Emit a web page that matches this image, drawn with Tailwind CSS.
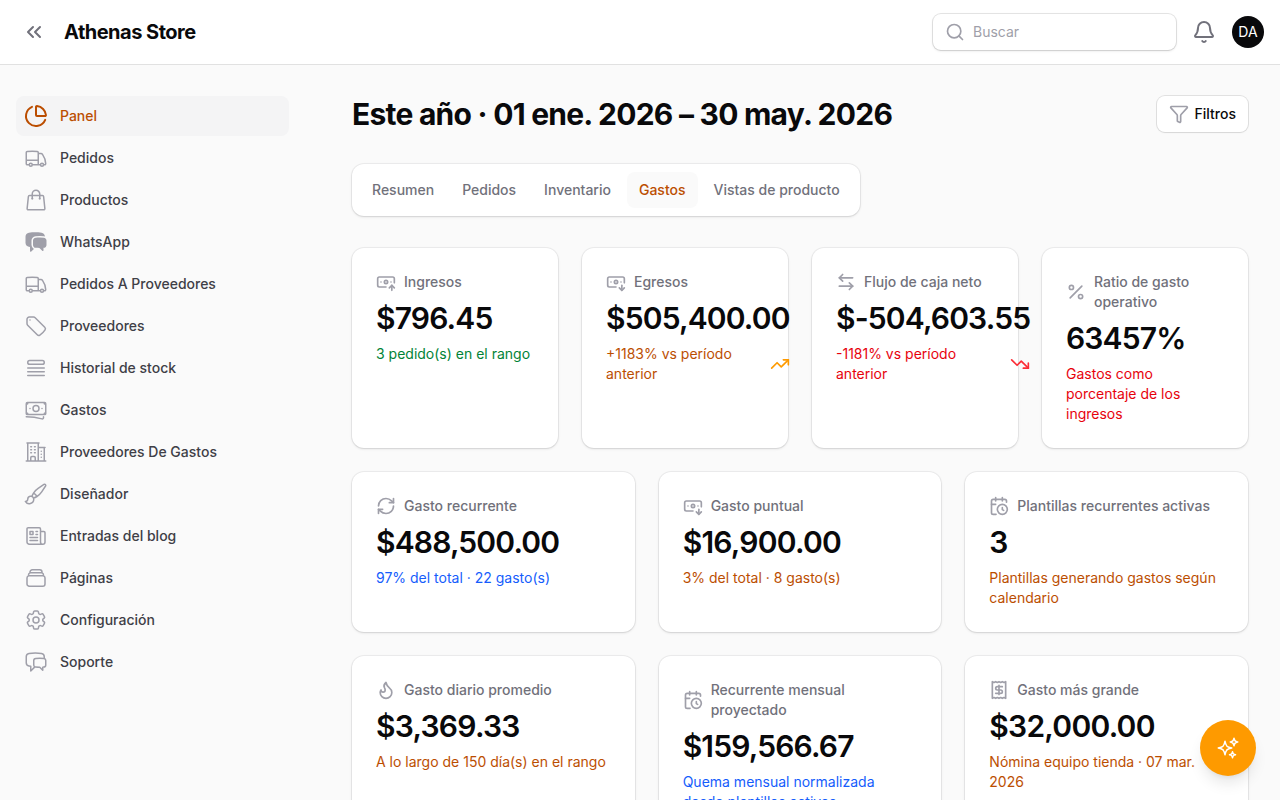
<!DOCTYPE html>
<html lang="es">
<head>
    <meta charset="UTF-8">
    <meta name="viewport" content="width=device-width, initial-scale=1.0">
    <title>Panel - Athenas Store</title>
    <script src="https://cdn.jsdelivr.net/npm/@tailwindcss/browser@4"></script>
</head>
<body class="h-screen overflow-hidden bg-zinc-50 font-['Inter',sans-serif] text-sm text-zinc-950">
    <!-- Top bar -->
    <header class="flex h-16 items-center bg-white pl-[22px] pr-4 ring-1 ring-zinc-950/10">
        <svg class="size-6 text-zinc-500" viewBox="0 0 24 24" fill="none" stroke="currentColor" stroke-width="2" stroke-linecap="round" stroke-linejoin="round"><path d="m11 17-5-5 5-5"/><path d="m18 17-5-5 5-5"/></svg>
        <div class="ml-[18px] text-xl font-bold leading-5 tracking-tight">Athenas Store</div>
        <div class="ml-auto flex items-center gap-4">
            <div class="flex h-9 w-[243px] items-center gap-2 rounded-lg bg-white pl-3 shadow-sm ring-1 ring-zinc-950/10">
                <svg class="size-5 text-zinc-400" viewBox="0 0 24 24" fill="none" stroke="currentColor" stroke-width="2" stroke-linecap="round" stroke-linejoin="round"><path d="m21 21-4.34-4.34"/><circle cx="11" cy="11" r="8"/></svg>
                <span class="text-zinc-400">Buscar</span>
            </div>
            <svg class="size-6 text-zinc-500" viewBox="0 0 24 24" fill="none" stroke="currentColor" stroke-width="2" stroke-linecap="round" stroke-linejoin="round"><path d="M10.268 21a2 2 0 0 0 3.464 0"/><path d="M3.262 15.326A1 1 0 0 0 4 17h16a1 1 0 0 0 .74-1.673C19.41 13.956 18 12.499 18 8A6 6 0 0 0 6 8c0 4.499-1.411 5.956-2.738 7.326"/></svg>
            <div class="flex size-8 items-center justify-center rounded-full bg-zinc-950 text-sm text-white">DA</div>
        </div>
    </header>

    <div class="flex">
        <!-- Sidebar -->
        <aside class="w-80 shrink-0 py-8 pl-4">
            <ul class="flex w-[273px] flex-col gap-0.5 font-medium text-zinc-700">
                <li class="flex h-10 items-center gap-3 rounded-lg bg-zinc-100 px-2 text-amber-700">
                    <svg class="size-6" viewBox="0 0 24 24" fill="none" stroke="currentColor" stroke-width="2" stroke-linecap="round" stroke-linejoin="round"><path d="M21 12c.552 0 1.005-.449.95-.998a10 10 0 0 0-8.953-8.951c-.55-.055-.998.398-.998.95v8a1 1 0 0 0 1 1z"/><path d="M21.21 15.89A10 10 0 1 1 8 2.83"/></svg>
                    <span>Panel</span>
                </li>
                <li class="flex h-10 items-center gap-3 rounded-lg px-2">
                    <svg class="size-6 text-zinc-400" viewBox="0 0 24 24" fill="none" stroke="currentColor" stroke-width="1.5" stroke-linecap="round" stroke-linejoin="round"><path d="M8.25 18.75a1.5 1.5 0 0 1-3 0m3 0a1.5 1.5 0 0 0-3 0m3 0h6m-9 0H3.375a1.125 1.125 0 0 1-1.125-1.125V14.25m17.25 4.5a1.5 1.5 0 0 1-3 0m3 0a1.5 1.5 0 0 0-3 0m3 0h1.125c.621 0 1.129-.504 1.09-1.124a17.902 17.902 0 0 0-3.213-9.193 2.056 2.056 0 0 0-1.58-.86H14.25M16.5 18.75h-2.25m0-11.177v-.958c0-.568-.422-1.048-.987-1.106a48.554 48.554 0 0 0-10.026 0 1.106 1.106 0 0 0-.987 1.106v7.635m12-6.677v6.677m0 4.5v-4.5m0 0h-12"/></svg>
                    <span>Pedidos</span>
                </li>
                <li class="flex h-10 items-center gap-3 rounded-lg px-2">
                    <svg class="size-6 text-zinc-400" viewBox="0 0 24 24" fill="none" stroke="currentColor" stroke-width="1.5" stroke-linecap="round" stroke-linejoin="round"><path d="M15.75 10.5V6a3.75 3.75 0 1 0-7.5 0v4.5m11.356-1.993 1.263 12c.07.665-.45 1.243-1.119 1.243H4.25a1.125 1.125 0 0 1-1.12-1.243l1.264-12A1.125 1.125 0 0 1 5.513 7.5h12.974c.576 0 1.059.435 1.119 1.007ZM8.625 10.5a.375.375 0 1 1-.75 0 .375.375 0 0 1 .75 0Zm7.5 0a.375.375 0 1 1-.75 0 .375.375 0 0 1 .75 0Z"/></svg>
                    <span>Productos</span>
                </li>
                <li class="flex h-10 items-center gap-3 rounded-lg px-2">
                    <svg class="size-6 text-zinc-400" viewBox="0 0 24 24" fill="currentColor"><path d="M4.913 2.658c2.075-.27 4.19-.408 6.337-.408 2.147 0 4.262.139 6.337.408 1.922.25 3.291 1.861 3.405 3.727a4.403 4.403 0 0 0-1.032-.211 50.89 50.89 0 0 0-8.42 0c-2.358.196-4.04 2.19-4.04 4.434v4.286a4.47 4.47 0 0 0 2.433 3.984L7.28 21.53A.75.75 0 0 1 6 21v-4.03a48.527 48.527 0 0 1-1.087-.128C2.905 16.58 1.5 14.833 1.5 12.862V6.638c0-1.97 1.405-3.718 3.413-3.979Z"/><path d="M15.75 7.5c-1.376 0-2.739.057-4.086.169C10.124 7.797 9 9.103 9 10.609v4.285c0 1.507 1.128 2.814 2.67 2.94 1.243.102 2.5.157 3.768.165l2.782 2.781a.75.75 0 0 0 1.28-.53v-2.39l.33-.026c1.542-.125 2.67-1.433 2.67-2.94v-4.286c0-1.505-1.125-2.811-2.664-2.94A49.392 49.392 0 0 0 15.75 7.5Z"/></svg>
                    <span>WhatsApp</span>
                </li>
                <li class="flex h-10 items-center gap-3 rounded-lg px-2">
                    <svg class="size-6 text-zinc-400" viewBox="0 0 24 24" fill="none" stroke="currentColor" stroke-width="1.5" stroke-linecap="round" stroke-linejoin="round"><path d="M8.25 18.75a1.5 1.5 0 0 1-3 0m3 0a1.5 1.5 0 0 0-3 0m3 0h6m-9 0H3.375a1.125 1.125 0 0 1-1.125-1.125V14.25m17.25 4.5a1.5 1.5 0 0 1-3 0m3 0a1.5 1.5 0 0 0-3 0m3 0h1.125c.621 0 1.129-.504 1.09-1.124a17.902 17.902 0 0 0-3.213-9.193 2.056 2.056 0 0 0-1.58-.86H14.25M16.5 18.75h-2.25m0-11.177v-.958c0-.568-.422-1.048-.987-1.106a48.554 48.554 0 0 0-10.026 0 1.106 1.106 0 0 0-.987 1.106v7.635m12-6.677v6.677m0 4.5v-4.5m0 0h-12"/></svg>
                    <span>Pedidos A Proveedores</span>
                </li>
                <li class="flex h-10 items-center gap-3 rounded-lg px-2">
                    <svg class="size-6 text-zinc-400" viewBox="0 0 24 24" fill="none" stroke="currentColor" stroke-width="1.5" stroke-linecap="round" stroke-linejoin="round"><path d="M9.568 3H5.25A2.25 2.25 0 0 0 3 5.25v4.318c0 .597.237 1.17.659 1.591l9.581 9.581c.699.699 1.78.872 2.607.33a18.095 18.095 0 0 0 5.223-5.223c.542-.827.369-1.908-.33-2.607L11.16 3.66A2.25 2.25 0 0 0 9.568 3Z"/><path d="M6 6h.008v.008H6V6Z"/></svg>
                    <span>Proveedores</span>
                </li>
                <li class="flex h-10 items-center gap-3 rounded-lg px-2">
                    <svg class="size-6 text-zinc-400" viewBox="0 0 24 24" fill="none" stroke="currentColor" stroke-width="1.5" stroke-linecap="round" stroke-linejoin="round"><path d="M3.75 12h16.5m-16.5 3.75h16.5M3.75 19.5h16.5M5.625 4.5h12.75a1.875 1.875 0 0 1 0 3.75H5.625a1.875 1.875 0 0 1 0-3.75Z"/></svg>
                    <span>Historial de stock</span>
                </li>
                <li class="flex h-10 items-center gap-3 rounded-lg px-2">
                    <svg class="size-6 text-zinc-400" viewBox="0 0 24 24" fill="none" stroke="currentColor" stroke-width="1.5" stroke-linecap="round" stroke-linejoin="round"><path d="M2.25 18.75a60.07 60.07 0 0 1 15.797 2.101c.727.198 1.453-.342 1.453-1.096V18.75M3.75 4.5v.75A.75.75 0 0 1 3 6h-.75m0 0v-.375c0-.621.504-1.125 1.125-1.125H20.25M2.25 6v9m18-10.5v.75c0 .414.336.75.75.75h.75m-1.5-1.5h.375c.621 0 1.125.504 1.125 1.125v9.75c0 .621-.504 1.125-1.125 1.125h-.375m1.5-1.5H21a.75.75 0 0 0-.75.75v.75m0 0H3.75m0 0h-.375a1.125 1.125 0 0 1-1.125-1.125V15m1.5 1.5v-.75A.75.75 0 0 0 3 15h-.75M15 10.5a3 3 0 1 1-6 0 3 3 0 0 1 6 0Zm3 0h.008v.008H18V10.5Zm-12 0h.008v.008H6V10.5Z"/></svg>
                    <span>Gastos</span>
                </li>
                <li class="flex h-10 items-center gap-3 rounded-lg px-2">
                    <svg class="size-6 text-zinc-400" viewBox="0 0 24 24" fill="none" stroke="currentColor" stroke-width="1.5" stroke-linecap="round" stroke-linejoin="round"><path d="M2.25 21h19.5m-18-18v18m10.5-18v18m6-13.5V21M6.75 6.75h.75m-.75 3h.75m-.75 3h.75m3-6h.75m-.75 3h.75m-.75 3h.75M6.75 21v-3.375c0-.621.504-1.125 1.125-1.125h2.25c.621 0 1.125.504 1.125 1.125V21M3 3h12m-.75 4.5H21m-3.75 3.75h.008v.008h-.008v-.008Zm0 3h.008v.008h-.008v-.008Zm0 3h.008v.008h-.008v-.008Z"/></svg>
                    <span>Proveedores De Gastos</span>
                </li>
                <li class="flex h-10 items-center gap-3 rounded-lg px-2">
                    <svg class="size-6 text-zinc-400" viewBox="0 0 24 24" fill="none" stroke="currentColor" stroke-width="1.5" stroke-linecap="round" stroke-linejoin="round"><path d="M9.53 16.122a3 3 0 0 0-5.78 1.128 2.25 2.25 0 0 1-2.4 2.245 4.5 4.5 0 0 0 8.4-2.245c0-.399-.078-.78-.22-1.128Zm0 0a15.998 15.998 0 0 0 3.388-1.62m-5.043-.025a15.994 15.994 0 0 1 1.622-3.395m3.42 3.42a15.995 15.995 0 0 0 4.764-4.648l3.876-5.814a1.151 1.151 0 0 0-1.597-1.597L14.146 6.32a15.996 15.996 0 0 0-4.649 4.763m3.42 3.42a6.776 6.776 0 0 0-3.42-3.42"/></svg>
                    <span>Diseñador</span>
                </li>
                <li class="flex h-10 items-center gap-3 rounded-lg px-2">
                    <svg class="size-6 text-zinc-400" viewBox="0 0 24 24" fill="none" stroke="currentColor" stroke-width="1.5" stroke-linecap="round" stroke-linejoin="round"><path d="M12 7.5h1.5m-1.5 3h1.5m-7.5 3h7.5m-7.5 3h7.5m3-9h3.375c.621 0 1.125.504 1.125 1.125V18a2.25 2.25 0 0 1-2.25 2.25M16.5 7.5V18a2.25 2.25 0 0 0 2.25 2.25M16.5 7.5V4.875c0-.621-.504-1.125-1.125-1.125H4.125C3.504 3.75 3 4.254 3 4.875V18a2.25 2.25 0 0 0 2.25 2.25h13.5M6 7.5h3v3H6v-3Z"/></svg>
                    <span>Entradas del blog</span>
                </li>
                <li class="flex h-10 items-center gap-3 rounded-lg px-2">
                    <svg class="size-6 text-zinc-400" viewBox="0 0 24 24" fill="none" stroke="currentColor" stroke-width="1.5" stroke-linecap="round" stroke-linejoin="round"><path d="M6 6.878V6a2.25 2.25 0 0 1 2.25-2.25h7.5A2.25 2.25 0 0 1 18 6v.878m-12 0c.235-.083.487-.128.75-.128h10.5c.263 0 .515.045.75.128m-12 0A2.25 2.25 0 0 0 4.5 9v.878m13.5-3A2.25 2.25 0 0 1 19.5 9v.878m0 0a2.246 2.246 0 0 0-.75-.128H5.25c-.263 0-.515.045-.75.128m15 0A2.25 2.25 0 0 1 21 12v6a2.25 2.25 0 0 1-2.25 2.25H5.25A2.25 2.25 0 0 1 3 18v-6c0-.98.626-1.813 1.5-2.122"/></svg>
                    <span>Páginas</span>
                </li>
                <li class="flex h-10 items-center gap-3 rounded-lg px-2">
                    <svg class="size-6 text-zinc-400" viewBox="0 0 24 24" fill="none" stroke="currentColor" stroke-width="1.5" stroke-linecap="round" stroke-linejoin="round"><path d="M9.594 3.94c.09-.542.56-.94 1.11-.94h2.593c.55 0 1.02.398 1.11.94l.213 1.281c.063.374.313.686.645.87.074.04.147.083.22.127.325.196.72.257 1.075.124l1.217-.456a1.125 1.125 0 0 1 1.37.49l1.296 2.247a1.125 1.125 0 0 1-.26 1.431l-1.003.827c-.293.241-.438.613-.43.992a7.723 7.723 0 0 1 0 .255c-.008.378.137.75.43.991l1.004.827c.424.35.534.955.26 1.43l-1.298 2.247a1.125 1.125 0 0 1-1.369.491l-1.217-.456c-.355-.133-.75-.072-1.076.124a6.47 6.47 0 0 1-.22.128c-.331.183-.581.495-.644.869l-.213 1.281c-.09.543-.56.94-1.11.94h-2.594c-.55 0-1.019-.398-1.11-.94l-.213-1.281c-.062-.374-.312-.686-.644-.87a6.52 6.52 0 0 1-.22-.127c-.325-.196-.72-.257-1.076-.124l-1.217.456a1.125 1.125 0 0 1-1.369-.49l-1.297-2.247a1.125 1.125 0 0 1 .26-1.431l1.004-.827c.292-.24.437-.613.43-.991a6.932 6.932 0 0 1 0-.255c.007-.38-.138-.751-.43-.992l-1.004-.827a1.125 1.125 0 0 1-.26-1.43l1.297-2.247a1.125 1.125 0 0 1 1.37-.491l1.216.456c.356.133.751.072 1.076-.124.072-.044.146-.086.22-.128.332-.183.582-.495.644-.869l.214-1.28Z"/><path d="M15 12a3 3 0 1 1-6 0 3 3 0 0 1 6 0Z"/></svg>
                    <span>Configuración</span>
                </li>
                <li class="flex h-10 items-center gap-3 rounded-lg px-2">
                    <svg class="size-6 text-zinc-400" viewBox="0 0 24 24" fill="none" stroke="currentColor" stroke-width="1.5" stroke-linecap="round" stroke-linejoin="round"><path d="M20.25 8.511c.884.284 1.5 1.128 1.5 2.097v4.286c0 1.136-.847 2.1-1.98 2.193-.34.027-.68.052-1.02.072v3.091l-3-3c-1.354 0-2.694-.055-4.02-.163a2.115 2.115 0 0 1-.825-.242m9.345-8.334a2.126 2.126 0 0 0-.476-.095 48.64 48.64 0 0 0-8.048 0c-1.131.094-1.976 1.057-1.976 2.192v4.286c0 .837.46 1.58 1.155 1.951m9.345-8.334V6.637c0-1.621-1.152-3.026-2.76-3.235A48.455 48.455 0 0 0 11.25 3c-2.115 0-4.198.137-6.24.402-1.608.209-2.76 1.614-2.76 3.235v6.226c0 1.621 1.152 3.026 2.76 3.235.577.075 1.157.14 1.74.194V21l4.155-4.155"/></svg>
                    <span>Soporte</span>
                </li>
            </ul>
        </aside>

        <main class="flex min-w-0 flex-1 flex-col gap-8 px-8 py-8">
            <div class="flex items-center justify-between">
                <h1 class="text-3xl font-bold tracking-tight">Este año · 01 ene. 2026 – 30 may. 2026</h1>
                <button class="flex h-9 items-center gap-1.5 rounded-lg bg-white px-3 font-medium shadow-xs ring-1 ring-zinc-950/10">
                    <svg class="size-5 text-zinc-400" viewBox="0 0 24 24" fill="none" stroke="currentColor" stroke-width="2" stroke-linecap="round" stroke-linejoin="round"><path d="M10 20a1 1 0 0 0 .553.895l2 1A1 1 0 0 0 14 21v-7a2 2 0 0 1 .517-1.341L21.74 4.67A1 1 0 0 0 21 3H3a1 1 0 0 0-.742 1.67l7.225 7.989A2 2 0 0 1 10 14z"/></svg>
                    Filtros
                </button>
            </div>

            <!-- Tabs -->
            <nav class="flex w-fit gap-1 rounded-xl bg-white p-2 font-medium text-zinc-500 shadow-sm ring-1 ring-zinc-950/5">
                <a class="rounded-lg px-3 py-2">Resumen</a>
                <a class="rounded-lg px-3 py-2">Pedidos</a>
                <a class="rounded-lg px-3 py-2">Inventario</a>
                <a class="rounded-lg bg-zinc-50 px-3 py-2 text-amber-700">Gastos</a>
                <a class="rounded-lg px-3 py-2">Vistas de producto</a>
            </nav>

            <div class="flex flex-col gap-6">
                <div class="grid grid-cols-4 gap-6">
                    <div class="rounded-xl bg-white p-6 shadow-sm ring-1 ring-zinc-950/5">
                        <div class="grid gap-y-2">
                            <div class="flex items-center gap-2 font-medium text-zinc-500">
                                <svg class="size-5 shrink-0 text-zinc-400" viewBox="0 0 24 24" fill="none" stroke="currentColor" stroke-width="2" stroke-linecap="round" stroke-linejoin="round"><path d="M12 18H4a2 2 0 0 1-2-2V8a2 2 0 0 1 2-2h16a2 2 0 0 1 2 2v5"/><path d="M18 12h.01"/><path d="M19 22v-6"/><path d="m22 19-3-3-3 3"/><path d="M6 12h.01"/><circle cx="12" cy="12" r="2"/></svg>
                                <span>Ingresos</span>
                            </div>
                            <div class="text-3xl font-semibold tracking-[-0.028em]">$796.45</div>
                            <div class="text-green-700">3 pedido(s) en el rango</div>
                        </div>
                    </div>
                    <div class="min-w-0 rounded-xl bg-white p-6 shadow-sm ring-1 ring-zinc-950/5">
                        <div class="grid gap-y-2">
                            <div class="flex items-center gap-2 font-medium text-zinc-500">
                                <svg class="size-5 shrink-0 text-zinc-400" viewBox="0 0 24 24" fill="none" stroke="currentColor" stroke-width="2" stroke-linecap="round" stroke-linejoin="round"><path d="M12 18H4a2 2 0 0 1-2-2V8a2 2 0 0 1 2-2h16a2 2 0 0 1 2 2v5"/><path d="m16 19 3 3 3-3"/><path d="M18 12h.01"/><path d="M19 16v6"/><path d="M6 12h.01"/><circle cx="12" cy="12" r="2"/></svg>
                                <span>Egresos</span>
                            </div>
                            <div class="text-3xl font-semibold tracking-[-0.028em]">$505,400.00</div>
                            <div class="flex items-center gap-1 text-amber-700">
                                <span>+1183% vs período anterior</span>
                                <svg class="size-5 shrink-0 text-amber-500" viewBox="0 0 24 24" fill="none" stroke="currentColor" stroke-width="2" stroke-linecap="round" stroke-linejoin="round"><path d="M16 7h6v6"/><path d="m22 7-8.5 8.5-5-5L2 17"/></svg>
                            </div>
                        </div>
                    </div>
                    <div class="min-w-0 rounded-xl bg-white p-6 shadow-sm ring-1 ring-zinc-950/5">
                        <div class="grid gap-y-2">
                            <div class="flex items-center gap-2 font-medium text-zinc-500">
                                <svg class="size-5 shrink-0 text-zinc-400" viewBox="0 0 24 24" fill="none" stroke="currentColor" stroke-width="2" stroke-linecap="round" stroke-linejoin="round"><path d="M8 3 4 7l4 4"/><path d="M4 7h16"/><path d="m16 21 4-4-4-4"/><path d="M20 17H4"/></svg>
                                <span>Flujo de caja neto</span>
                            </div>
                            <div class="text-3xl font-semibold tracking-[-0.028em] whitespace-nowrap">$-504,603.55</div>
                            <div class="flex items-center gap-1 text-red-600">
                                <span>-1181% vs período anterior</span>
                                <svg class="size-5 shrink-0 text-red-500" viewBox="0 0 24 24" fill="none" stroke="currentColor" stroke-width="2" stroke-linecap="round" stroke-linejoin="round"><path d="M16 17h6v-6"/><path d="m22 17-8.5-8.5-5 5L2 7"/></svg>
                            </div>
                        </div>
                    </div>
                    <div class="min-w-0 rounded-xl bg-white p-6 shadow-sm ring-1 ring-zinc-950/5">
                        <div class="grid gap-y-2">
                            <div class="flex items-center gap-2 font-medium text-zinc-500">
                                <svg class="size-5 shrink-0 text-zinc-400" viewBox="0 0 24 24" fill="none" stroke="currentColor" stroke-width="2" stroke-linecap="round" stroke-linejoin="round"><path d="M19 5 5 19"/><circle cx="6.5" cy="6.5" r="2.5"/><circle cx="17.5" cy="17.5" r="2.5"/></svg>
                                <span>Ratio de gasto operativo</span>
                            </div>
                            <div class="text-3xl font-semibold tracking-[-0.028em]">63457%</div>
                            <div class="text-red-600">Gastos como porcentaje de los ingresos</div>
                        </div>
                    </div>
                </div>

                <div class="grid grid-cols-3 gap-6">
                    <div class="rounded-xl bg-white p-6 shadow-sm ring-1 ring-zinc-950/5">
                        <div class="grid gap-y-2">
                            <div class="flex items-center gap-2 font-medium text-zinc-500">
                                <svg class="size-5 shrink-0 text-zinc-400" viewBox="0 0 24 24" fill="none" stroke="currentColor" stroke-width="2" stroke-linecap="round" stroke-linejoin="round"><path d="M3 12a9 9 0 0 1 9-9 9.75 9.75 0 0 1 6.74 2.74L21 8"/><path d="M21 3v5h-5"/><path d="M21 12a9 9 0 0 1-9 9 9.75 9.75 0 0 1-6.74-2.74L3 16"/><path d="M8 16H3v5"/></svg>
                                <span>Gasto recurrente</span>
                            </div>
                            <div class="text-3xl font-semibold tracking-[-0.028em]">$488,500.00</div>
                            <div class="text-blue-600">97% del total · 22 gasto(s)</div>
                        </div>
                    </div>
                    <div class="rounded-xl bg-white p-6 shadow-sm ring-1 ring-zinc-950/5">
                        <div class="grid gap-y-2">
                            <div class="flex items-center gap-2 font-medium text-zinc-500">
                                <svg class="size-5 shrink-0 text-zinc-400" viewBox="0 0 24 24" fill="none" stroke="currentColor" stroke-width="2" stroke-linecap="round" stroke-linejoin="round"><path d="M12 18H4a2 2 0 0 1-2-2V8a2 2 0 0 1 2-2h16a2 2 0 0 1 2 2v5"/><path d="m16 19 3 3 3-3"/><path d="M18 12h.01"/><path d="M19 16v6"/><path d="M6 12h.01"/><circle cx="12" cy="12" r="2"/></svg>
                                <span>Gasto puntual</span>
                            </div>
                            <div class="text-3xl font-semibold tracking-tight">$16,900.00</div>
                            <div class="text-amber-700">3% del total · 8 gasto(s)</div>
                        </div>
                    </div>
                    <div class="rounded-xl bg-white p-6 shadow-sm ring-1 ring-zinc-950/5">
                        <div class="grid gap-y-2">
                            <div class="flex items-center gap-2 font-medium text-zinc-500">
                                <svg class="size-5 shrink-0 text-zinc-400" viewBox="0 0 24 24" fill="none" stroke="currentColor" stroke-width="2" stroke-linecap="round" stroke-linejoin="round"><path d="M16 14v2.2l1.6 1"/><path d="M16 2v4"/><path d="M21 7.5V6a2 2 0 0 0-2-2H5a2 2 0 0 0-2 2v14a2 2 0 0 0 2 2h3.5"/><path d="M3 10h5"/><path d="M8 2v4"/><circle cx="16" cy="16" r="6"/></svg>
                                <span>Plantillas recurrentes activas</span>
                            </div>
                            <div class="text-3xl font-semibold tracking-tight">3</div>
                            <div class="text-amber-700">Plantillas generando gastos según calendario</div>
                        </div>
                    </div>
                </div>

                <div class="grid grid-cols-3 gap-6">
                    <div class="rounded-xl bg-white p-6 shadow-sm ring-1 ring-zinc-950/5">
                        <div class="grid gap-y-2">
                            <div class="flex items-center gap-2 font-medium text-zinc-500">
                                <svg class="size-5 shrink-0 text-zinc-400" viewBox="0 0 24 24" fill="none" stroke="currentColor" stroke-width="2" stroke-linecap="round" stroke-linejoin="round"><path d="M8.5 14.5A2.5 2.5 0 0 0 11 12c0-1.38-.5-2-1-3-1.072-2.143-.224-4.054 2-6 .5 2.5 2 4.9 4 6.5 2 1.6 3 3.5 3 5.5a7 7 0 1 1-14 0c0-1.153.433-2.294 1-3a2.5 2.5 0 0 0 2.5 2.5z"/></svg>
                                <span>Gasto diario promedio</span>
                            </div>
                            <div class="text-3xl font-semibold tracking-tight">$3,369.33</div>
                            <div class="text-amber-700">A lo largo de 150 día(s) en el rango</div>
                        </div>
                    </div>
                    <div class="rounded-xl bg-white p-6 shadow-sm ring-1 ring-zinc-950/5">
                        <div class="grid gap-y-2">
                            <div class="flex items-center gap-2 font-medium text-zinc-500">
                                <svg class="size-5 shrink-0 text-zinc-400" viewBox="0 0 24 24" fill="none" stroke="currentColor" stroke-width="2" stroke-linecap="round" stroke-linejoin="round"><path d="M16 14v2.2l1.6 1"/><path d="M16 2v4"/><path d="M21 7.5V6a2 2 0 0 0-2-2H5a2 2 0 0 0-2 2v14a2 2 0 0 0 2 2h3.5"/><path d="M3 10h5"/><path d="M8 2v4"/><circle cx="16" cy="16" r="6"/></svg>
                                <span>Recurrente mensual proyectado</span>
                            </div>
                            <div class="text-3xl font-semibold tracking-[-0.028em]">$159,566.67</div>
                            <div class="text-blue-600">Quema mensual normalizada desde plantillas activas</div>
                        </div>
                    </div>
                    <div class="rounded-xl bg-white p-6 shadow-sm ring-1 ring-zinc-950/5">
                        <div class="grid gap-y-2">
                            <div class="flex items-center gap-2 font-medium text-zinc-500">
                                <svg class="size-5 shrink-0 text-zinc-400" viewBox="0 0 24 24" fill="none" stroke="currentColor" stroke-width="2" stroke-linecap="round" stroke-linejoin="round"><path d="M4 2v20l2-1 2 1 2-1 2 1 2-1 2 1 2-1 2 1V2l-2 1-2-1-2 1-2-1-2 1-2-1-2 1Z"/><path d="M16 8h-6a2 2 0 1 0 0 4h4a2 2 0 1 1 0 4H8"/><path d="M12 17.5v-11"/></svg>
                                <span>Gasto más grande</span>
                            </div>
                            <div class="text-3xl font-semibold tracking-tight">$32,000.00</div>
                            <div class="text-amber-700">Nómina equipo tienda · 07 mar. 2026</div>
                        </div>
                    </div>
                </div>
            </div>
        </main>
    </div>

    <!-- Floating assistant button -->
    <button class="fixed bottom-6 right-6 flex size-14 items-center justify-center rounded-full bg-amber-500 text-white shadow-lg">
        <svg class="size-6" viewBox="0 0 24 24" fill="none" stroke="currentColor" stroke-width="1.5" stroke-linecap="round" stroke-linejoin="round"><path d="M9.813 15.904 9 18.75l-.813-2.846a4.5 4.5 0 0 0-3.09-3.09L2.25 12l2.846-.813a4.5 4.5 0 0 0 3.09-3.09L9 5.25l.813 2.846a4.5 4.5 0 0 0 3.09 3.09L15.75 12l-2.846.813a4.5 4.5 0 0 0-3.09 3.09ZM18.259 8.715 18 9.75l-.259-1.035a3.375 3.375 0 0 0-2.455-2.456L14.25 6l1.036-.259a3.375 3.375 0 0 0 2.455-2.456L18 2.25l.259 1.035a3.375 3.375 0 0 0 2.456 2.456L21.75 6l-1.035.259a3.375 3.375 0 0 0-2.456 2.456ZM16.894 20.567 16.5 21.75l-.394-1.183a2.25 2.25 0 0 0-1.423-1.423L13.5 18.75l1.183-.394a2.25 2.25 0 0 0 1.423-1.423l.394-1.183.394 1.183a2.25 2.25 0 0 0 1.423 1.423l1.183.394-1.183.394a2.25 2.25 0 0 0-1.423 1.423Z"/></svg>
    </button>
</body>
</html>
